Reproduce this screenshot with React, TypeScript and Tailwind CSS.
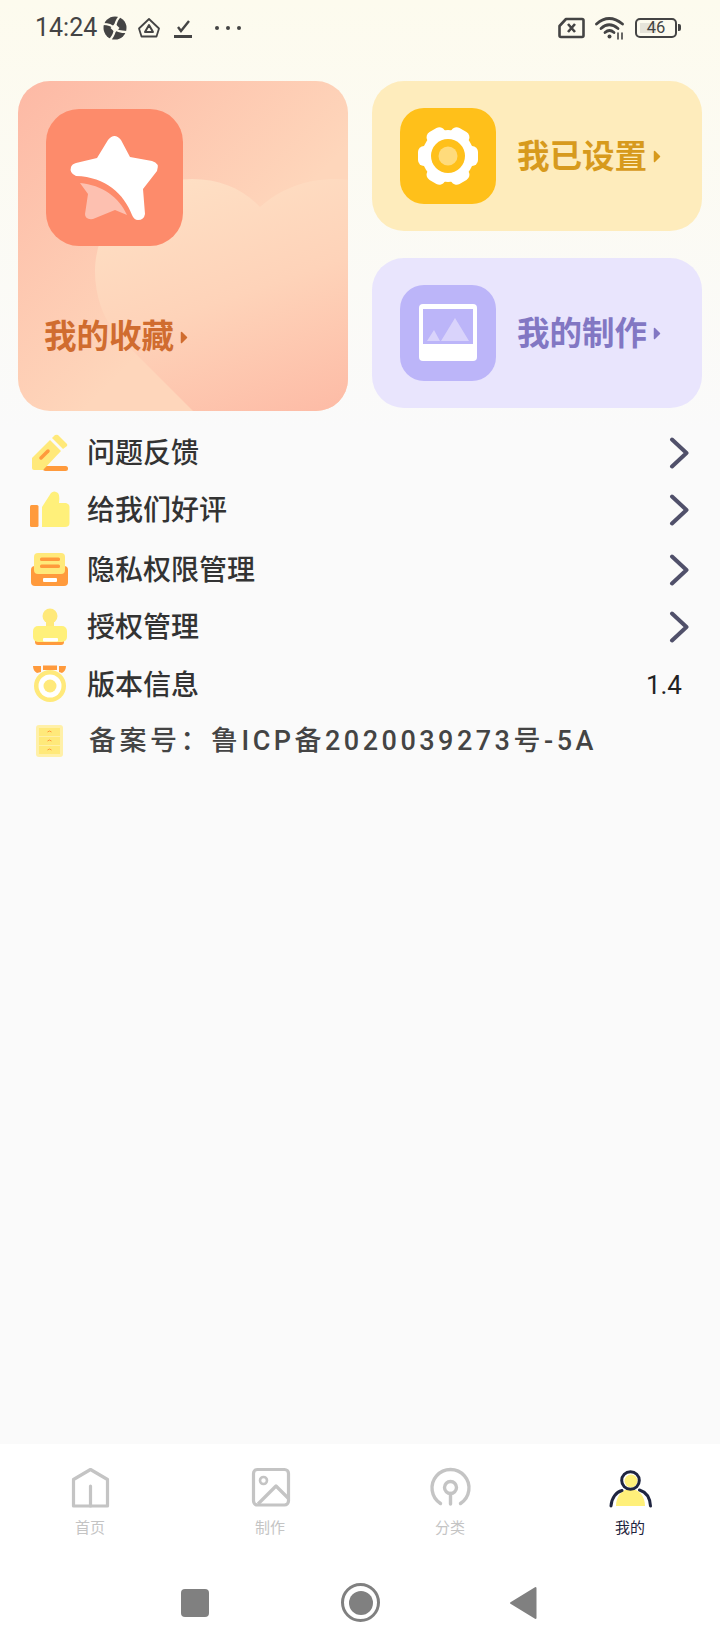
import React from 'react';

const CJK = "font-['Roboto','Noto_Sans_CJK_SC',sans-serif]";

function StatusBar() {
    return (
        <div className="flex h-[54px] items-center pt-[1px] text-[#444444]">
            <span className="ml-[35px] font-['Roboto',sans-serif] text-[25px] leading-none">14:24</span>
            {/* ball icon */}
            <svg width="24" height="24" viewBox="0 0 24 24" className="ml-[6px]">
                <circle cx="12" cy="12" r="11.5" fill="#444444" />
                <path d="M0 8 Q8 8 11 12 Q14 16 24 16 M17 0 Q12 6 12 12 Q12 18 7 24" stroke="#fdfbee" strokeWidth="2.2" fill="none" />
                <path d="M12 7.5 L16.5 12 L12 16.5 L7.5 12 Z" fill="#fdfbee" />
            </svg>
            <svg width="24" height="24" viewBox="0 0 24 24" className="ml-[10px]" fill="none" stroke="#444444" strokeLinejoin="round">
                <path d="M12 3 L22 12.5 L19.5 20.5 H4.5 L2 12.5 Z" strokeWidth="1.8" />
                <path d="M12 9 L16 16 H8 Z" strokeWidth="2" />
            </svg>
            <svg width="20" height="24" viewBox="0 0 20 24" className="ml-[12px]" fill="none" stroke="#444444">
                <path d="M5 11 L8 15 L16 5" strokeWidth="2.4" />
                <path d="M1 20.5 H19" strokeWidth="3" />
            </svg>
            <div className="ml-[22px] flex gap-[7px]">
                <span className="h-[4px] w-[4px] rounded-full bg-[#444444]" />
                <span className="h-[4px] w-[4px] rounded-full bg-[#444444]" />
                <span className="h-[4px] w-[4px] rounded-full bg-[#444444]" />
            </div>
            <div className="flex-1" />
            {/* sim */}
            <svg width="27" height="22" viewBox="0 0 27 22" fill="none" stroke="#444444">
                <path d="M8 2 H24 Q25.5 2 25.5 3.5 V18.5 Q25.5 20 24 20 H3 Q1.5 20 1.5 18.5 V9 Z" strokeWidth="2.6" strokeLinejoin="round" />
                <path d="M10 7 L17 15 M17 7 L10 15" strokeWidth="2.6" />
            </svg>
            {/* wifi */}
            <svg width="30" height="24" viewBox="0 0 30 24" className="ml-[10px]" fill="none" stroke="#444444" strokeLinecap="round">
                <path d="M1.5 8 Q14 -3 27.5 8" strokeWidth="2.8" />
                <path d="M6 12.5 Q14 5 23 12.5" strokeWidth="2.8" />
                <path d="M10 16.5 Q14.5 12.5 19 16.5" strokeWidth="2.8" />
                <circle cx="14.5" cy="20.5" r="2" fill="#444444" stroke="none" />
                <path d="M23 17 V23 M27 17 V23" strokeWidth="1.6" />
            </svg>
            {/* battery */}
            <div className="ml-[10px] mr-[39px] flex items-center">
                <div className="relative flex h-[20px] w-[42px] items-center justify-center rounded-[5px] border-[2px] border-[#444444]">
                    <span className="absolute top-[3px] bottom-[3px] left-[3px] w-[16px] bg-[#e6e4da]" />
                    <span className="relative pt-[1px] font-['Roboto',sans-serif] text-[16.5px] leading-none">46</span>
                </div>
                <span className="ml-[1px] h-[7px] w-[3px] rounded-r-[2px] bg-[#444444]" />
            </div>
        </div>
    );
}

function CardArrow({ color }: { color: string }) {
    return (
        <svg width="8" height="15" viewBox="0 0 8 15" className="ml-[6px]">
            <path d="M1.5 2.5 L6.5 7.5 L1.5 12.5 Z" fill={color} stroke={color} strokeWidth="1.5" strokeLinejoin="round" />
        </svg>
    );
}

function StarIcon() {
    return (
        <svg width="137" height="137" viewBox="0 0 137 137" className="shrink-0">
            <rect width="137" height="137" rx="33" fill="#fd8b6b" />
            <path d="M34 74 C56 76 73 88 81 106 L69 101 L47 110 Q39 111 39 105 L42 85 Z" fill="#fdc0b0" />
            <path
                d="M62 31 Q68.5 23 75 31 L84 48 L106 52 Q114 54 111 62 L97 80 L99 105 Q98 111 92 111 Q88 111 86 106 C78 85 60 68 30 67 Q23 64 25 58 Q26 55 30 54 L51 49 Z"
                fill="#ffffff"
            />
        </svg>
    );
}

function GearIcon() {
    return (
        <svg width="96" height="96" viewBox="0 0 96 96" className="shrink-0">
            <rect width="96" height="96" rx="24" fill="#ffc01a" />
            <circle cx="48" cy="48" r="26" fill="#ffffff" />
            {[0, 60, 120, 180, 240, 300].map((a) => (
                <rect key={a} x="38" y="18" width="20" height="14" rx="6" fill="#ffffff" transform={`rotate(${a + 30} 48 48)`} />
            ))}
            <circle cx="48" cy="48" r="17" fill="#ffc01a" />
            <circle cx="48" cy="48" r="9.5" fill="#ffdb7b" />
        </svg>
    );
}

function PictureIcon() {
    return (
        <svg width="96" height="96" viewBox="0 0 96 96" className="shrink-0">
            <rect width="96" height="96" rx="24" fill="#bcb5f9" />
            <rect x="19" y="19" width="58" height="57" rx="4" fill="#ffffff" />
            <rect x="23" y="24" width="50" height="35" fill="#bcb5f9" />
            <path d="M55 33 L69 56 H41 Z M34 45 L40 56 H27 Z" fill="#d9d3fb" />
        </svg>
    );
}

function PencilIcon() {
    return (
        <svg width="40" height="40" viewBox="0 0 40 40">
            <rect x="13" y="33" width="25" height="5" rx="2.5" fill="#ff9a3c" />
            <path d="M2 25 L20 7 L31 18 L13 37 L4 37 Q2 37 2 35 Z" fill="#ffe97a" />
            <path d="M22 5 L25 2 Q27 1.5 28 2 L37 11 Q37.5 12 37 13 L33 16 Z" fill="#ffe97a" />
            <path d="M11 25 L18 18" stroke="#ff9a3c" strokeWidth="3.5" strokeLinecap="round" />
        </svg>
    );
}

function ThumbIcon() {
    return (
        <svg width="40" height="40" viewBox="0 0 40 40">
            <rect x="0" y="15" width="8.5" height="22" rx="1.5" fill="#ff9a3c" />
            <path d="M12 17 L21 3 Q24 0 28 3 Q30 5 29 13 L36 13 Q39.5 14 39.5 17 V33 Q39.5 37 35 37 H12 Z" fill="#fff07a" />
        </svg>
    );
}

function DrawerIcon() {
    return (
        <svg width="40" height="40" viewBox="0 0 40 40">
            <rect x="1" y="16" width="37" height="20" rx="4" fill="#ff9a3c" />
            <rect x="4" y="3" width="31" height="21" rx="4" fill="#ffe97a" />
            <rect x="10" y="7.5" width="20" height="3.5" rx="1.5" fill="#ff9a3c" />
            <rect x="10" y="14.5" width="20" height="3.5" rx="1.5" fill="#ff9a3c" />
            <rect x="13" y="28" width="14" height="4" rx="1" fill="#ffffff" />
        </svg>
    );
}

function StampIcon() {
    return (
        <svg width="40" height="40" viewBox="0 0 40 40">
            <rect x="5" y="28" width="29" height="10" rx="3" fill="#ff9a3c" />
            <circle cx="20" cy="9" r="7.5" fill="#ffe97a" />
            <rect x="16" y="12" width="8" height="9" fill="#ffe97a" />
            <rect x="3" y="19" width="34" height="16" rx="5" fill="#fff07a" />
            <rect x="13" y="31" width="15" height="3.5" rx="1" fill="#ffffff" />
        </svg>
    );
}

function MedalIcon() {
    return (
        <svg width="40" height="40" viewBox="0 0 40 40">
            <circle cx="20" cy="21" r="16" fill="#ffe97a" />
            <circle cx="20" cy="21" r="11.5" fill="#ffffff" />
            <circle cx="20" cy="21" r="6.5" fill="#ffe97a" />
            <path d="M3 1 H11 V7 L7 8 Q3 6 3 1 Z M13 0.5 H27 V5 H13 Z M29 1 H36 Q36 6 32 8 L29 7 Z" fill="#ff9a3c" />
        </svg>
    );
}

function FileIcon() {
    return (
        <svg width="40" height="40" viewBox="0 0 40 40">
            <rect x="6" y="4" width="27" height="32" rx="3" fill="#fff0a8" />
            <rect x="9" y="7" width="21" height="8" fill="#ffe97a" />
            <rect x="9" y="16" width="21" height="8" fill="#ffe97a" />
            <rect x="9" y="25" width="21" height="8" fill="#ffe97a" />
            <path d="M17.5 11 Q19.5 9 21.5 11 M17.5 20 Q19.5 18 21.5 20 M17.5 29 Q19.5 27 21.5 29" stroke="#ff9a3c" strokeWidth="1" fill="none" />
        </svg>
    );
}

function Chevron() {
    return (
        <svg width="20" height="32" viewBox="0 0 20 32" fill="none" stroke="#50506a" strokeWidth="4" strokeLinecap="round" strokeLinejoin="round">
            <path d="M3 2.5 L17.5 16 L3 29.5" />
        </svg>
    );
}

function Row({ icon, title, mt, right }: { icon: React.ReactNode; title: string; mt: string; right: React.ReactNode }) {
    return (
        <div className={`flex h-[56px] items-center ${mt}`}>
            <div className="ml-[30px] w-[40px] shrink-0">{icon}</div>
            <span className="ml-[17px] flex-1 pt-[2px] text-[28px] leading-none font-medium text-[#333333]">{title}</span>
            {right}
        </div>
    );
}

function HomeTab() {
    return (
        <svg width="44" height="44" viewBox="0 0 44 44" fill="none" stroke="#c4c4c4" strokeWidth="3.2" strokeLinejoin="round">
            <path d="M22.5 3.5 L39.5 13.5 V40 H5.5 V13.5 Z" />
            <path d="M22.5 20 V40" strokeLinecap="round" />
        </svg>
    );
}

function ImageTab() {
    return (
        <svg width="44" height="44" viewBox="0 0 44 44" fill="none" stroke="#c4c4c4" strokeWidth="3.2" strokeLinejoin="round">
            <rect x="5.5" y="3.5" width="35" height="35.5" rx="4" />
            <circle cx="15.5" cy="14.5" r="3.5" strokeWidth="2.6" />
            <path d="M10 38 L28 20 L40 32" />
        </svg>
    );
}

function CategoryTab() {
    return (
        <svg width="44" height="44" viewBox="0 0 44 44" fill="none" stroke="#c4c4c4" strokeWidth="3.4" strokeLinecap="round">
            <path d="M12.5 37.5 A18.5 18.5 0 1 1 32.5 37.5" />
            <circle cx="22.5" cy="21.5" r="6" />
            <path d="M22.5 27.5 V38" />
        </svg>
    );
}

function MeTab() {
    return (
        <svg width="44" height="44" viewBox="0 0 44 44" fill="none">
            <path d="M8 40 C8 30 14 23 22.5 23 C31 23 37 30 37 40 Z" fill="#fff07a" />
            <circle cx="23" cy="15" r="6.5" fill="#fff07a" />
            <circle cx="22.5" cy="14.5" r="8.8" stroke="#1f2540" strokeWidth="3" />
            <path d="M3 40 C3.5 32 8 26 14 24.5 M42.5 40 C42 32 38 26 31.5 24" stroke="#1f2540" strokeWidth="3" strokeLinecap="round" />
        </svg>
    );
}

function Tab({ icon, label, active }: { icon: React.ReactNode; label: string; active?: boolean }) {
    return (
        <div className="flex flex-1 flex-col items-center">
            {icon}
            <span className={`mt-[8px] text-[15px] leading-[20px] ${active ? 'text-[#1f2540]' : 'text-[#c4c4c4]'}`}>{label}</span>
        </div>
    );
}

export default function App() {
    return (
        <div className={`flex h-[1650px] w-[720px] flex-col bg-[linear-gradient(180deg,#fdfbee_0px,#fafafa_430px)] ${CJK}`}>
            <StatusBar />

            {/* top cards */}
            <div className="mt-[27px] flex gap-[24px] px-[18px]">
                <div className="relative h-[330px] w-[330px] overflow-hidden rounded-[32px] bg-[linear-gradient(135deg,#fdb9a5_0%,#fed6bb_60%)]">
                    {/* heart behind the content */}
                    <svg width="330" height="330" viewBox="0 0 330 330" className="absolute inset-0">
                        <defs>
                            <linearGradient id="heart" x1="0.25" y1="0" x2="0.75" y2="1">
                                <stop offset="0" stopColor="#fedfc4" />
                                <stop offset="0.45" stopColor="#fed3b9" />
                                <stop offset="1" stopColor="#fdb9a4" />
                            </linearGradient>
                        </defs>
                        <path d="M174 329 L100 255 C85 238 77 215 77 190 C77 140 120 98 174 98 C202 98 225 108 242 126 C262 108 288 98 318 98 C370 98 420 140 420 190 L420 340 L185 340 Z" fill="url(#heart)" />
                    </svg>
                    <div className="relative flex h-full flex-col pt-[28px] pl-[28px]">
                        <StarIcon />
                        <div className="mt-[69px] -ml-[2px] flex items-center">
                            <span className="text-[32.5px] leading-[44px] font-bold text-[#d06c2f]">我的收藏</span>
                            <CardArrow color="#d06c2f" />
                        </div>
                    </div>
                </div>

                <div className="flex w-[330px] flex-col gap-[27px]">
                    <div className="flex h-[150px] items-center rounded-[32px] bg-[#feecbc] pl-[28px]">
                        <GearIcon />
                        <span className="ml-[21px] pt-[2px] text-[32.5px] leading-none font-bold text-[#d79a1d]">我已设置</span>
                        <CardArrow color="#d79a1d" />
                    </div>
                    <div className="flex h-[150px] items-center rounded-[32px] bg-[#e9e5fd] pl-[28px]">
                        <PictureIcon />
                        <span className="ml-[21px] pt-[2px] text-[32.5px] leading-none font-bold text-[#8277c3]">我的制作</span>
                        <CardArrow color="#8277c3" />
                    </div>
                </div>
            </div>

            {/* menu */}
            <div className="mt-[14px] flex flex-col">
                <Row icon={<PencilIcon />} title="问题反馈" mt="" right={<div className="mr-[31px]"><Chevron /></div>} />
                <Row icon={<ThumbIcon />} title="给我们好评" mt="mt-[1px]" right={<div className="mr-[31px]"><Chevron /></div>} />
                <Row icon={<DrawerIcon />} title="隐私权限管理" mt="mt-[4px]" right={<div className="mr-[31px]"><Chevron /></div>} />
                <Row icon={<StampIcon />} title="授权管理" mt="mt-[1px]" right={<div className="mr-[31px]"><Chevron /></div>} />
                <Row icon={<MedalIcon />} title="版本信息" mt="mt-[2px]" right={<span className="mr-[38px] text-[26px] leading-none text-[#222222]">1.4</span>} />
                <div className="flex h-[56px] items-center">
                    <div className="ml-[30px] w-[40px] shrink-0">
                        <FileIcon />
                    </div>
                    <span className="ml-[19px] text-[27px] leading-none font-medium tracking-[3.5px] text-[#444444]">备案号：鲁ICP备2020039273号-5A</span>
                </div>
            </div>

            <div className="flex-1" />

            {/* bottom nav */}
            <div className="h-[206px] bg-white">
                <div className="flex pt-[22px]">
                    <Tab icon={<HomeTab />} label="首页" />
                    <Tab icon={<ImageTab />} label="制作" />
                    <Tab icon={<CategoryTab />} label="分类" />
                    <Tab icon={<MeTab />} label="我的" active />
                </div>
                <div className="mt-[45px] ml-[181px] flex items-center">
                    <span className="h-[28px] w-[28px] rounded-[4px] bg-[#808080]" />
                    <span className="ml-[132px] flex h-[39px] w-[39px] items-center justify-center rounded-full border-[3.5px] border-[#808080]">
                        <span className="h-[24px] w-[24px] rounded-full bg-[#808080]" />
                    </span>
                    <svg width="28" height="34" viewBox="0 0 28 34" className="ml-[129px]">
                        <path d="M26.5 2 V32 L2 17 Z" fill="#808080" stroke="#808080" strokeWidth="2" strokeLinejoin="round" />
                    </svg>
                </div>
            </div>
        </div>
    );
}
